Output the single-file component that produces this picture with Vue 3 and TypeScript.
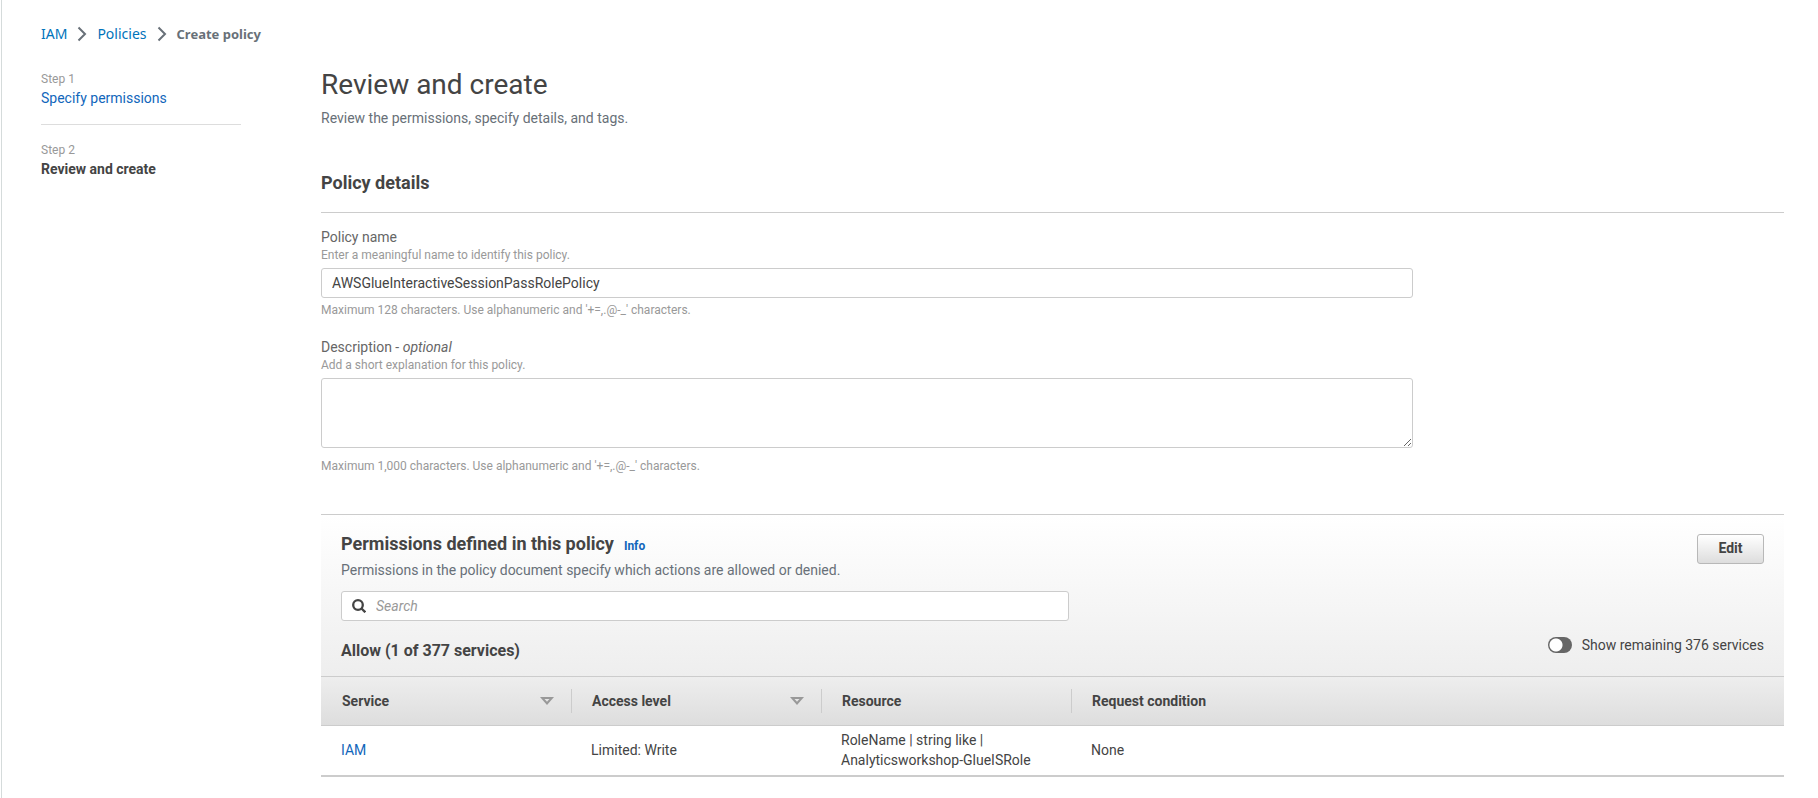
<script setup lang="ts">
import { ref } from 'vue'

interface Column {
  label: string
  sortable: boolean
}

interface Row {
  service: string
  access: string
  resource: string[]
  condition: string
}

const policyName = ref('AWSGlueInteractiveSessionPassRolePolicy')
const description = ref('')
const query = ref('')
const showRemaining = ref(false)

const columns: Column[] = [
  { label: 'Service', sortable: true },
  { label: 'Access level', sortable: true },
  { label: 'Resource', sortable: false },
  { label: 'Request condition', sortable: false },
]

const rows: Row[] = [
  {
    service: 'IAM',
    access: 'Limited: Write',
    resource: ['RoleName | string like |', 'Analyticsworkshop-GlueISRole'],
    condition: 'None',
  },
]
</script>

<template>
  <div class="page">
    <nav class="breadcrumbs" aria-label="Breadcrumbs">
      <a href="#">IAM</a>
      <svg class="chevron" viewBox="0 0 10 16" aria-hidden="true"><path d="M1.5 1.5 8 8l-6.5 6.5" /></svg>
      <a href="#">Policies</a>
      <svg class="chevron" viewBox="0 0 10 16" aria-hidden="true"><path d="M1.5 1.5 8 8l-6.5 6.5" /></svg>
      <span class="current">Create policy</span>
    </nav>

    <div class="layout">
      <aside class="steps">
        <div class="step">
          <div class="step-no">Step 1</div>
          <a href="#">Specify permissions</a>
        </div>
        <div class="step">
          <div class="step-no">Step 2</div>
          <strong>Review and create</strong>
        </div>
      </aside>

      <main class="content">
        <h1>Review and create</h1>
        <p class="lead">Review the permissions, specify details, and tags.</p>

        <section class="details">
          <h2>Policy details</h2>
          <div class="field">
            <label for="policy-name">Policy name</label>
            <div class="hint">Enter a meaningful name to identify this policy.</div>
            <input id="policy-name" v-model="policyName" class="box" type="text" />
            <div class="hint below">Maximum 128 characters. Use alphanumeric and '+=,.@-_' characters.</div>
          </div>
          <div class="field">
            <label for="policy-description">Description - <em>optional</em></label>
            <div class="hint">Add a short explanation for this policy.</div>
            <textarea id="policy-description" v-model="description" class="box area"></textarea>
            <div class="hint below">Maximum 1,000 characters. Use alphanumeric and '+=,.@-_' characters.</div>
          </div>
        </section>

        <section class="panel">
          <header class="panel-head">
            <div class="panel-top">
              <div>
                <div class="title-line">
                  <h2>Permissions defined in this policy</h2>
                  <a class="info" href="#">Info</a>
                </div>
                <p class="lead">Permissions in the policy document specify which actions are allowed or denied.</p>
              </div>
              <button class="edit" type="button">Edit</button>
            </div>
            <div class="search">
              <svg viewBox="0 0 14 14" aria-hidden="true">
                <circle cx="6" cy="6" r="4.8" />
                <path d="m9.5 9.5 3.8 3.8" />
              </svg>
              <input v-model="query" type="search" placeholder="Search" aria-label="Search" />
            </div>
            <div class="summary">
              <h3>Allow (1 of 377 services)</h3>
              <label class="toggle">
                <input v-model="showRemaining" type="checkbox" role="switch" />
                <span>Show remaining 376 services</span>
              </label>
            </div>
          </header>

          <table>
            <thead>
              <tr>
                <th v-for="col in columns" :key="col.label" scope="col">
                  <div class="th-inner">
                    <span>{{ col.label }}</span>
                    <svg v-if="col.sortable" viewBox="0 0 14 8" aria-hidden="true">
                      <path fill-rule="evenodd" d="M0 0h14L7 8zM4.5 2 7 4.8 9.5 2z" />
                    </svg>
                  </div>
                </th>
              </tr>
            </thead>
            <tbody>
              <tr v-for="row in rows" :key="row.service">
                <td><a href="#">{{ row.service }}</a></td>
                <td>{{ row.access }}</td>
                <td><div v-for="line in row.resource" :key="line">{{ line }}</div></td>
                <td>{{ row.condition }}</td>
              </tr>
            </tbody>
          </table>
        </section>
      </main>
    </div>
  </div>
</template>

<style>
body {
  margin: 0;
  background: #fff;
}
</style>

<style scoped>
.page,
.page * {
  box-sizing: border-box;
}

.page {
  min-height: 100vh;
  margin-left: 1px;
  padding: 24px 34px 20px 39px;
  border-left: 1px solid #d5dbdb;
  color: #444;
  font: 14px/20px Roboto, "Liberation Sans", sans-serif;
}

a {
  color: #16b;
  text-decoration: none;
}

h1,
h2,
h3,
p {
  margin: 0;
}

.breadcrumbs {
  display: flex;
  align-items: center;
  height: 20px;
  font-family: "Noto Sans", sans-serif;
}

.breadcrumbs a {
  color: #0073bb;
}

.current {
  color: #687078;
  font-size: 13px;
  font-weight: 700;
}

.chevron {
  width: 10px;
  height: 16px;
  margin: 0 10px;
  fill: none;
  stroke: #687078;
  stroke-width: 2;
}

.layout {
  display: grid;
  grid-template-columns: 200px minmax(0, 1fr);
  column-gap: 80px;
}

.steps {
  padding-top: 26px;
}

.step + .step {
  margin-top: 16px;
  padding-top: 16px;
  border-top: 1px solid #ddd;
}

.step-no {
  color: #999;
  font-size: 12px;
  line-height: 18px;
}

.step strong {
  font-weight: 700;
}

.content {
  padding-top: 21px;
}

h1 {
  font-size: 28px;
  font-weight: 400;
  line-height: 40px;
}

.lead {
  color: #687078;
}

.content > .lead {
  margin-top: 3px;
}

h2 {
  font-size: 18px;
  font-weight: 700;
  line-height: 24px;
}

.details {
  margin-top: 43px;
}

.details > h2 {
  padding-bottom: 17px;
  border-bottom: 1px solid #ccc;
}

.field {
  width: calc(75% - 5px);
  padding-top: 14px;
}

.field + .field {
  padding-top: 19px;
}

.field label {
  display: block;
  color: #666;
}

.hint {
  color: #999;
  font-size: 12px;
  line-height: 16px;
}

.hint.below {
  padding-top: 4px;
}

.box {
  display: block;
  width: 100%;
  height: 30px;
  margin-top: 5px;
  padding: 0 10px;
  border: 1px solid #ccc;
  border-radius: 3px;
  background: #fff;
  color: #444;
  font: inherit;
}

.area {
  height: 70px;
  padding: 6px 10px;
  resize: vertical;
}

.area + .below {
  padding-top: 10px;
}

.panel {
  margin-top: 40px;
}

.panel-head {
  padding: 17px 20px 15px;
  border-top: 1px solid #ccc;
  background: linear-gradient(#fff, #eee);
}

.panel-top,
.summary {
  display: flex;
  justify-content: space-between;
}

.title-line {
  display: flex;
  align-items: baseline;
  gap: 10px;
}

.title-line + .lead {
  margin-top: 4px;
}

.info {
  font-size: 12px;
  font-weight: 700;
}

.edit {
  min-width: 67px;
  height: 30px;
  margin-top: 2px;
  padding: 0 20px 2px;
  border: 1px solid #b8b8b8;
  border-radius: 3px;
  background: linear-gradient(#fff, #ddd);
  color: #444;
  font: inherit;
  font-weight: 700;
}

.search {
  display: flex;
  align-items: center;
  gap: 10px;
  width: 728px;
  max-width: 100%;
  height: 30px;
  margin-top: 11px;
  padding: 0 10px;
  border: 1px solid #ccc;
  border-radius: 3px;
  background: #fff;
}

.search svg {
  width: 14px;
  height: 14px;
  fill: none;
  stroke: #444;
  stroke-width: 2.3;
}

.search input {
  flex: 1;
  min-width: 0;
  padding: 0;
  border: 0;
  outline: 0;
  background: none;
  color: #444;
  font: inherit;
}

.search input::placeholder {
  color: #999;
  font-style: italic;
}

.summary {
  margin-top: 14px;
}

h3 {
  padding-top: 6px;
  font-size: 16px;
  font-weight: 700;
  line-height: 20px;
}

.toggle {
  display: flex;
  align-items: center;
  gap: 10px;
  height: 20px;
}

.toggle input {
  width: 24px;
  height: 16px;
  margin: 0;
  border-radius: 8px;
  appearance: none;
  background: radial-gradient(circle at 8px 8px, #fff 6px, #666 7px);
}

.toggle input:checked {
  background: radial-gradient(circle at 16px 8px, #fff 6px, #16b 7px);
}

table {
  width: 100%;
  border-collapse: separate;
  border-spacing: 0;
  table-layout: fixed;
}

thead tr {
  background: linear-gradient(#eee, #ddd);
}

th {
  width: 250px;
  height: 50px;
  padding: 0;
  border-top: 1px solid #ccc;
  border-bottom: 1px solid #ccc;
  font-weight: 700;
  text-align: left;
}

th:last-child {
  width: auto;
}

.th-inner {
  display: flex;
  align-items: center;
  justify-content: space-between;
  height: 24px;
  padding: 0 17px 0 20px;
  border-left: 1px solid #ccc;
}

th:first-child .th-inner {
  border-left-color: transparent;
}

.th-inner svg {
  width: 14px;
  height: 8px;
  fill: #999;
}

td {
  height: 51px;
  padding: 4px 20px 5px;
  border-bottom: 2px solid #ccc;
}
</style>
